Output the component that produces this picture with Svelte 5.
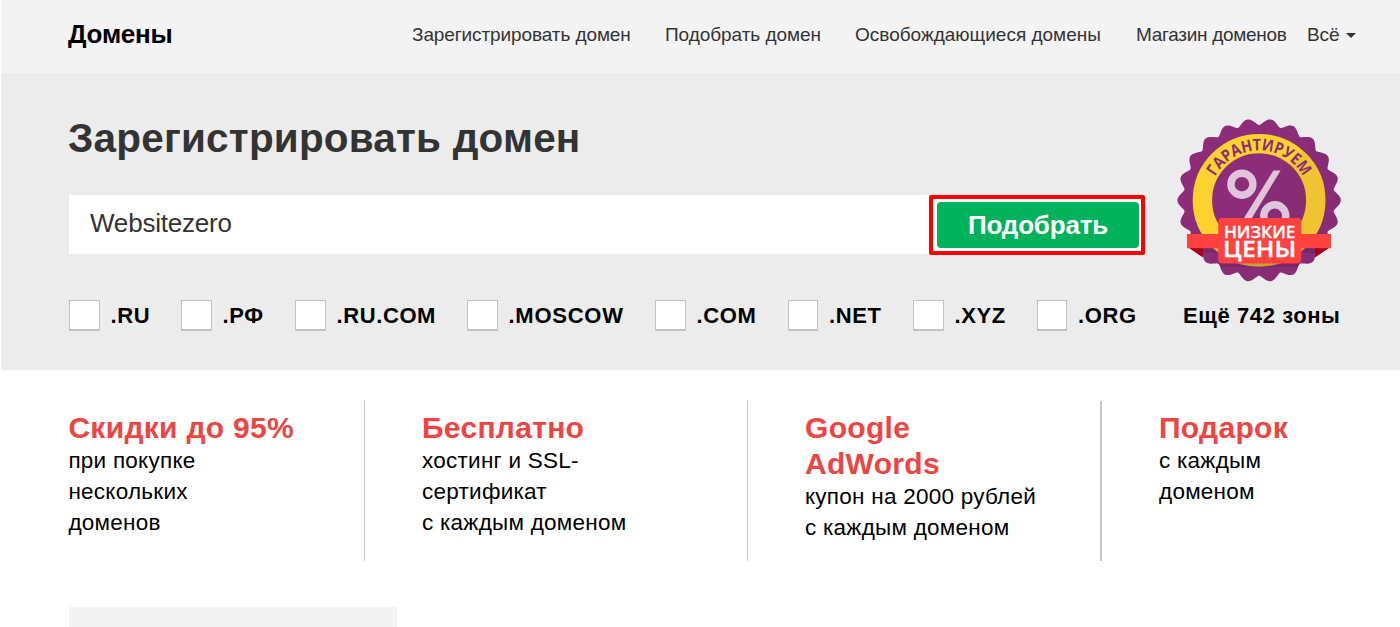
<script>
  const nav = ['Зарегистрировать домен', 'Подобрать домен', 'Освобождающиеся домены', 'Магазин доменов'];
  const zones = ['.RU', '.РФ', '.RU.COM', '.MOSCOW', '.COM', '.NET', '.XYZ', '.ORG'];
  const benefits = [
    { title: ['Скидки до 95%'], text: ['при покупке', 'нескольких', 'доменов'] },
    { title: ['Бесплатно'], text: ['хостинг и SSL-', 'сертификат', 'с каждым доменом'] },
    { title: ['Google', 'AdWords'], text: ['купон на 2000 рублей', 'с каждым доменом'] },
    { title: ['Подарок'], text: ['с каждым', 'доменом'] }
  ];

  let query = $state('Websitezero');

  // Scalloped outline of the seal: 22 rounded teeth
  const points = [];
  for (let i = 0; i < 528; i++) {
    const a = (i / 528) * Math.PI * 2;
    const r = 75.3 + 6.4 * Math.pow(Math.abs(Math.cos(11 * a)), 1.5);
    points.push(`${(99.1 + r * Math.cos(a)).toFixed(2)},${(100.3 + r * Math.sin(a)).toFixed(2)}`);
  }
  const seal = points.join(' ');
</script>

<div class="page">
  <header>
    <strong class="brand">Домены</strong>
    <nav>
      {#each nav as item}<a href="#top">{item}</a>{/each}
      <a href="#top" class="all">Всё <i></i></a>
    </nav>
  </header>

  <section class="hero">
    <div class="main">
      <h1>Зарегистрировать домен</h1>
      <div class="search">
        <input type="text" bind:value={query} />
        <div class="frame"><button>Подобрать</button></div>
      </div>
    </div>
    <svg class="badge" width="200" height="200" viewBox="0 0 200 200">
      <defs>
        <clipPath id="sealClip"><polygon points={seal} /></clipPath>
        <path id="arc" d="M49.2 100.3 A49.9 49.9 0 0 1 149 100.3" />
      </defs>
      <polygon points={seal} fill="#8d2d79" />
      <circle cx="99.1" cy="100.3" r="56.7" fill="none" stroke="#fdd22e" stroke-width="19.4" />
      <g clip-path="url(#sealClip)">
        <path d="M120 71 L157 38 L190 60 V190 H75 L50 160 Z" fill="#4b2050" opacity=".08" />
        <path d="M27 148 H173 L163 153 H141 V162 Q141 167 136 167 H64 Q59 167 59 162 V153 H37 Z" fill="#3c1640" opacity=".2" />
      </g>
      <text class="seal-text" font-size="16.2"><textPath href="#arc" startOffset="50%" text-anchor="middle" textLength="107" lengthAdjust="spacingAndGlyphs">ГАРАНТИРУЕМ</textPath></text>
      <g fill="none" stroke="#dfc5dc" stroke-width="7.4">
        <circle cx="81.9" cy="84.2" r="11" />
        <circle cx="114.8" cy="115.8" r="11" />
      </g>
      <path d="M113.4 70.6 H120.6 L89.5 122 H81.5 Z" fill="#dfc5dc" />
      <path d="M29 148 H43 V157.5 Z M169 148 H155 V157.5 Z" fill="#a4001c" />
      <rect x="27" y="134" width="144" height="14.2" fill="#ff4240" />
      <rect x="58.3" y="118" width="83" height="45.5" rx="4" fill="#ff4240" />
      <text class="label" x="63.9" y="137.7" font-size="17" textLength="71.5" lengthAdjust="spacingAndGlyphs">НИЗКИЕ</text>
      <text class="label" x="63.1" y="156.6" font-size="21.6" textLength="73.2" lengthAdjust="spacingAndGlyphs">ЦЕНЫ</text>
    </svg>
    <div class="zones">
      {#each zones as zone}
        <label><span class="box"></span>{zone}</label>
      {/each}
      <a href="#top" class="more">Ещё 742 зоны</a>
    </div>
  </section>

  <section class="benefits">
    {#each benefits as b}
      <article>
        <h2>{#each b.title as line}<span>{line}</span>{/each}</h2>
        <p>{#each b.text as line}<span>{line}</span>{/each}</p>
      </article>
    {/each}
  </section>

  <div class="panel"></div>
</div>

<style>
  :global(body) { background: #fff; overflow: hidden; }
  .page {
    box-sizing: border-box;
    height: 627px;
    padding-left: 1px;
    overflow: hidden;
    font-family: "Liberation Sans", Arial, sans-serif;
    color: #000;
  }
  h1, h2, p { margin: 0; }
  a { color: inherit; text-decoration: none; white-space: nowrap; }
  header {
    display: grid;
    grid-template-columns: 344px 1fr;
    height: 73px;
    box-sizing: border-box;
    padding-left: 67px;
    background: #f3f3f3;
    line-height: 69px;
  }
  .brand { font-size: 26px; letter-spacing: -.25px; }
  nav {
    display: grid;
    grid-template-columns: 253px 190px 281px 171px 60px;
    font-size: 19px;
    letter-spacing: -.05px;
    color: #333;
  }
  nav a:nth-child(1) { letter-spacing: -.1px; }
  nav a:nth-child(3) { letter-spacing: 0; }
  nav a:nth-child(4) { letter-spacing: -.3px; }
  .all i {
    display: inline-block;
    border: 5px solid transparent;
    border-top-color: #333;
    border-bottom: 0;
    vertical-align: 3px;
    margin-left: 1px;
  }
  .hero {
    display: grid;
    grid-template-columns: 1076px 200px;
    grid-template-rows: 227px 70px;
    column-gap: 15px;
    height: 297px;
    box-sizing: border-box;
    padding-left: 68px;
    background: #ececec;
  }
  h1 {
    height: 122px;
    padding-top: 40px;
    box-sizing: border-box;
    font-size: 40.5px;
    line-height: 50px;
    letter-spacing: .2px;
    margin-left: -1px;
    color: #333;
    white-space: nowrap;
  }
  .search { display: flex; }
  input {
    flex: 1;
    width: 0;
    height: 59px;
    box-sizing: border-box;
    border: 0;
    border-radius: 0;
    outline: 0;
    padding: 0 20px 2px 21px;
    background: #fff;
    color: #333;
    font: 26px "Liberation Sans", Arial, sans-serif;
    letter-spacing: -.2px;
  }
  .frame {
    display: flex;
    box-sizing: border-box;
    width: 216px;
    height: 60px;
    padding: 3px 2px 3px 4px;
    border: 4px solid #f00;
    border-radius: 2px;
    background: #fff;
  }
  button {
    flex: 1;
    border: 0;
    border-radius: 4px;
    padding: 0;
    background: #00b25b;
    color: #fff;
    font: bold 26px "Liberation Sans", Arial, sans-serif;
    letter-spacing: -.2px;
  }
  .badge { margin: 27px 0 0; }
  .seal-text { font-family: "Open Sans", "Noto Sans", sans-serif; font-weight: 700; fill: #8d2d79; }
  .label {
    font-family: "Open Sans", "Noto Sans", sans-serif;
    font-weight: 600;
    fill: #fff;
    stroke: #fff;
    stroke-width: .3px;
  }
  .zones {
    grid-column: 1 / -1;
    display: grid;
    grid-template-columns: 112px 114px 172px 188px 132.5px 125.5px 123.5px 146.5px 170px;
    align-items: start;
    font-size: 22px;
    font-weight: 700;
    line-height: 32.5px;
    letter-spacing: .6px;
  }
  label { display: flex; gap: 11px; white-space: nowrap; }
  label:nth-child(4) { letter-spacing: .75px; }
  .box {
    box-sizing: border-box;
    width: 30.5px;
    height: 31px;
    border: 1px solid #c3c3c3;
    border-bottom-width: 2px;
    background: #fff;
  }
  .benefits {
    display: grid;
    grid-template-columns: 296px 383px 354px 1fr;
    padding: 31px 0 0 68px;
    height: 237px;
    box-sizing: border-box;
  }
  article {
    height: 160px;
    box-sizing: border-box;
    padding: 9px 0 0 57px;
    border-right: 1px solid #c6c6c6;
    white-space: nowrap;
  }
  article:first-child { padding-left: 0; }
  article:first-child span { margin-left: -.6px; }
  article:nth-child(3) { border-right-width: 2px; }
  article:last-child { border: 0; }
  article span { display: block; }
  h2 { font-size: 30px; line-height: 36px; letter-spacing: .3px; color: #ee4444; }
  p { font-size: 22.5px; line-height: 30.9px; letter-spacing: .25px; }
  .panel { width: 328px; height: 20px; margin-left: 68px; background: #f3f3f3; }
</style>
